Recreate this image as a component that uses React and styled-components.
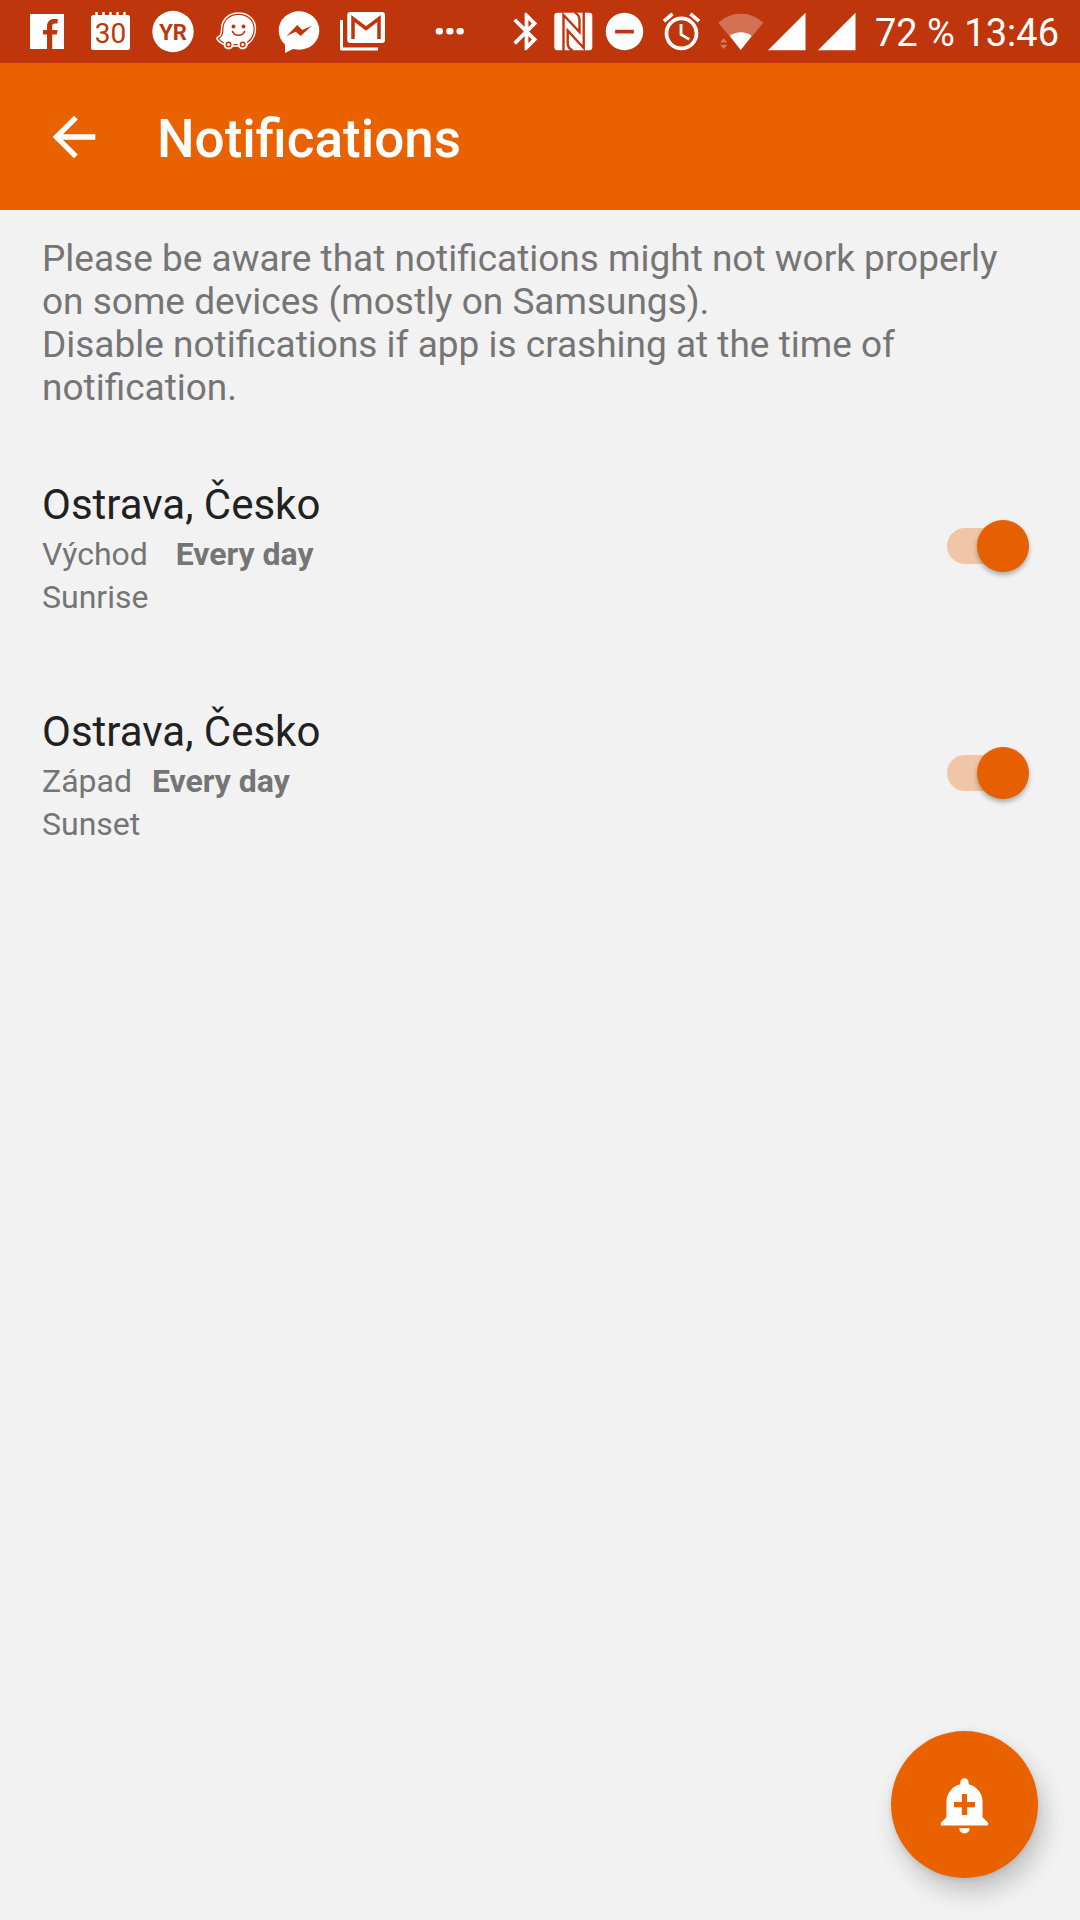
import { useState } from "react";
import styled, { createGlobalStyle } from "styled-components";
import { MdAccessAlarm, MdAddAlert, MdArrowBack, MdBluetooth, MdDoNotDisturbOn } from "react-icons/md";

const GlobalStyle = createGlobalStyle`
  * {
    box-sizing: border-box;
  }
  body {
    margin: 0;
    background: #f2f2f2;
    font-family: Roboto, "Noto Sans", sans-serif;
  }
`;

const StatusBar = styled.div`
  display: flex;
  justify-content: space-between;
  height: 63px;
  padding: 0 21px 0 15px;
  background: #bf360c;
  color: #fff;
`;

const StatusGroup = styled.div`
  display: flex;
  align-items: center;
`;

const StatusSlot = styled.div`
  display: flex;
  justify-content: center;
  align-items: center;
  width: ${({ $width }) => $width}px;
  height: 63px;
  font-size: 45px;
`;

const StatusText = styled.span`
  margin-left: 11px;
  padding-top: 4px;
  font-size: 38px;
  line-height: 43px;
  white-space: nowrap;
`;

const MoreIcon = styled.svg`
  margin-left: 38px;
`;

const Toolbar = styled.header`
  display: flex;
  align-items: center;
  gap: 51px;
  height: 147px;
  padding: 0 42px;
  background: #ea6100;
  color: #fff;
`;

const BackButton = styled.button`
  display: flex;
  padding: 0;
  border: none;
  background: none;
  color: inherit;
  font-size: 64px;
  cursor: pointer;
`;

const Title = styled.h1`
  margin: 0;
  padding-top: 4px;
  font-size: 53px;
  line-height: 62px;
  font-weight: 500;
`;

const Message = styled.p`
  margin: 0;
  padding: 27px 42px 0;
  font-size: 37px;
  line-height: 43px;
  color: #757575;
`;

const List = styled.ul`
  display: flex;
  flex-direction: column;
  gap: 88px;
  margin: 0;
  padding: 71px 51px 0 42px;
  list-style: none;
`;

const Item = styled.li`
  display: flex;
  justify-content: space-between;
  align-items: center;
`;

const ItemLabel = styled.label`
  display: flex;
  flex-direction: column;
`;

const Place = styled.span`
  margin-bottom: 4px;
  font-size: 42px;
  line-height: 49px;
  color: #212121;
`;

const Detail = styled.span`
  font-size: 32px;
  line-height: 43px;
  color: #757575;
  white-space: pre;
`;

const Repeat = styled.b`
  margin-left: 4px;
`;

const Switch = styled.input`
  appearance: none;
  position: relative;
  flex: none;
  width: 82px;
  height: 52px;
  margin: 0 0 8px;
  cursor: pointer;

  &::before {
    content: "";
    position: absolute;
    top: 8px;
    left: 0;
    width: 76px;
    height: 36px;
    border-radius: 18px;
    background: #c4c4c4;
  }

  &::after {
    content: "";
    position: absolute;
    top: 0;
    left: 0;
    width: 52px;
    height: 52px;
    border-radius: 50%;
    background: #fafafa;
    box-shadow: 0 3px 5px rgba(0, 0, 0, 0.3);
  }

  &:checked::before {
    background: #f1c5a8;
  }

  &:checked::after {
    left: 30px;
    background: #e65f00;
  }
`;

const AddButton = styled.button`
  position: fixed;
  right: 42px;
  bottom: 42px;
  display: flex;
  justify-content: center;
  align-items: center;
  width: 147px;
  height: 147px;
  padding: 0;
  border: none;
  border-radius: 50%;
  background: #ea6100;
  color: #fff;
  font-size: 63px;
  box-shadow: 6px 14px 24px rgba(0, 0, 0, 0.2), 0 2px 6px rgba(0, 0, 0, 0.1);
  cursor: pointer;
`;

const red = "#bf360c";

const FacebookIcon = () => (
  <svg width="63" height="63" viewBox="0 0 63 63">
    <path fill="#fff" d="M15 14h34v35H15z" />
    <path
      fill={red}
      d="M32 49V34.500h-4V30h4v-3.500c0-5 3-7.500 7-7.500h3.700v4.500h-2.500c-2.500 0-3 1-3 3V30h5.300l-.6 4.500h-4.700V49z"
    />
  </svg>
);

const CalendarIcon = () => (
  <svg width="63" height="63" viewBox="0 0 63 63">
    <rect x="13" y="15" width="39" height="35" rx="2.500" fill="#fff" />
    <path stroke="#fff" strokeWidth="2.400" d="M18.500 12v4M25.500 12v4M32.500 12v4M39.500 12v4M46.500 12v4" />
    <text x="32.500" y="43" textAnchor="middle" fontSize="28" fontWeight="400" fill={red}>30</text>
  </svg>
);

const YrIcon = () => (
  <svg width="63" height="63" viewBox="0 0 63 63">
    <circle cx="32" cy="31.500" r="20.700" fill="#fff" />
    <text x="32" y="40" textAnchor="middle" fontSize="22" fontWeight="700" fill={red}>YR</text>
  </svg>
);

const wazeBody =
  "M15 38.500c3-1 4.500-4 4.500-9.500 0-8.500 6.500-14 15-14s15 5.500 15 13.500c0 8-4.500 13.500-11.500 15.500H25c-5-1-8-3-10-5.500z";

const WazeIcon = () => (
  <svg width="63" height="63" viewBox="0 0 63 63" strokeLinejoin="round">
    <path d={wazeBody} fill="#fff" stroke="#fff" strokeWidth="5.400" />
    <path d={wazeBody} fill="#fff" stroke={red} strokeWidth="2.400" />
    <path d={wazeBody} fill="#fff" />
    <circle cx="24.500" cy="44.500" r="4" fill={red} stroke="#fff" strokeWidth="2" />
    <circle cx="38.700" cy="44.500" r="4" fill={red} stroke="#fff" strokeWidth="2" />
    <circle cx="24.500" cy="44.500" r="1.500" fill="#fff" />
    <circle cx="38.700" cy="44.500" r="1.500" fill="#fff" />
    <circle cx="29.500" cy="26.500" r="1.900" fill={red} />
    <circle cx="39.500" cy="26.500" r="1.900" fill={red} />
    <path d="M28.500 31.500c2 5 10 5 12 0" fill="none" stroke={red} strokeWidth="1.700" strokeLinecap="round" />
  </svg>
);

const MessengerIcon = () => (
  <svg width="63" height="63" viewBox="0 0 63 63">
    <ellipse cx="32" cy="30.500" rx="20.300" ry="19.300" fill="#fff" />
    <path fill="#fff" d="M18 42v11l10-5z" />
    <path fill={red} d="M19.700 36l10.600-11 5 5 9.400-4.300-11 10.300-5-4.300z" />
  </svg>
);

const GmailIcon = () => (
  <svg width="63" height="63" viewBox="0 0 63 63" fill="none">
    <rect x="17.300" y="12" width="37.700" height="31" rx="3" fill="#fff" />
    <path stroke="#fff" strokeWidth="3" strokeLinejoin="round" d="M11.500 20v29H48" />
    <path stroke={red} strokeWidth="3.500" d="M23 39V18.500l13 10 13-10V39" />
  </svg>
);

const NfcIcon = () => (
  <svg width="47" height="63" viewBox="0 0 47 63" fill="none">
    <rect x="4.300" y="12.700" width="38" height="37.600" rx="3" fill="#fff" />
    <g stroke={red} strokeWidth="2.400">
      <path d="M13.500 51V15l16 17V20c0-4-1.500-6-5-7.500" />
      <path d="M33.700 12v36l-16-17.500V43c0 4 1.500 6 5 7.500" />
    </g>
  </svg>
);

const WifiIcon = () => (
  <svg width="52" height="63" viewBox="0 0 52 63" fill="#fff">
    <path opacity=".3" d="M28.700 50L6.300 22.700c13-12 32-12 45 0z" />
    <path d="M28.700 50L18 36c6-5 15.500-5 21.600 0z" />
    <path opacity=".35" d="M8 42.500l3.700-4.300 3.700 4.300zM8 44.700h7.400L11.700 49z" />
  </svg>
);

const SignalIcon = () => (
  <svg width="50" height="63" viewBox="0 0 50 63" fill="#fff">
    <path d="M4 50.300L41.500 12.700v37.600z" />
  </svg>
);

const alerts = [
  { id: "sunrise", place: "Ostrava, Česko", event: "Východ   ", repeat: "Every day", note: "Sunrise" },
  { id: "sunset", place: "Ostrava, Česko", event: "Západ  ", repeat: "Every day", note: "Sunset" },
];

const AlertItem = ({ alert }) => {
  const [enabled, setEnabled] = useState(true);

  return (
    <Item>
      <ItemLabel htmlFor={alert.id}>
        <Place>{alert.place}</Place>
        <Detail>
          {alert.event}
          <Repeat>{alert.repeat}</Repeat>
        </Detail>
        <Detail>{alert.note}</Detail>
      </ItemLabel>
      <Switch
        id={alert.id}
        type="checkbox"
        role="switch"
        checked={enabled}
        onChange={() => setEnabled(!enabled)}
      />
    </Item>
  );
};

const App = () => (
  <>
    <GlobalStyle />
    <StatusBar>
      <StatusGroup>
        <FacebookIcon />
        <CalendarIcon />
        <YrIcon />
        <WazeIcon />
        <MessengerIcon />
        <GmailIcon />
        <MoreIcon width="36" height="63" viewBox="0 0 36 63" fill="#fff">
          <rect x="4.700" y="28" width="7.300" height="6.400" rx="3" />
          <rect x="15.200" y="28" width="7.300" height="6.400" rx="3" />
          <rect x="25.500" y="28" width="7.300" height="6.400" rx="3" />
        </MoreIcon>
      </StatusGroup>
      <StatusGroup>
        <StatusSlot $width={47}><MdBluetooth /></StatusSlot>
        <NfcIcon />
        <StatusSlot $width={55}><MdDoNotDisturbOn /></StatusSlot>
        <StatusSlot $width={60}><MdAccessAlarm /></StatusSlot>
        <WifiIcon />
        <SignalIcon />
        <SignalIcon />
        <StatusText>72 % 13:46</StatusText>
      </StatusGroup>
    </StatusBar>
    <Toolbar>
      <BackButton aria-label="Back"><MdArrowBack /></BackButton>
      <Title>Notifications</Title>
    </Toolbar>
    <main>
      <Message>
        Please be aware that notifications might not work properly on some devices (mostly on Samsungs).
        <br />
        Disable notifications if app is crashing at the time of notification.
      </Message>
      <List>
        {alerts.map((alert) => (
          <AlertItem key={alert.id} alert={alert} />
        ))}
      </List>
    </main>
    <AddButton aria-label="Add notification"><MdAddAlert /></AddButton>
  </>
);

export default App;
